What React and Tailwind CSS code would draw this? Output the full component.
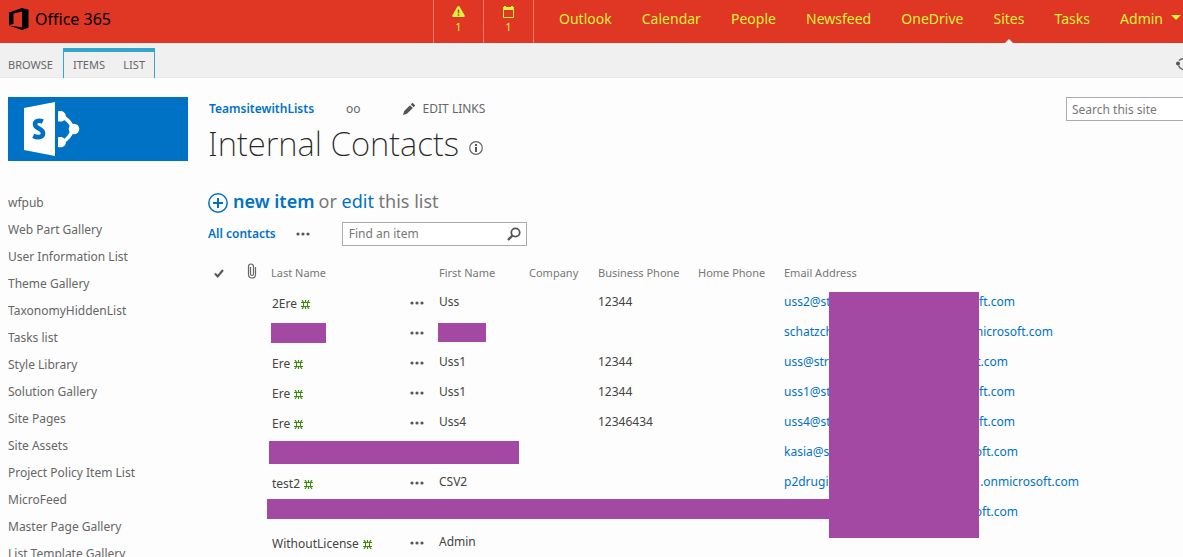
import React from "react";

const suiteLinks = ["Outlook", "Calendar", "People", "Newsfeed", "OneDrive", "Sites", "Tasks"];

const sideLinks = [
  "wfpub", "Web Part Gallery", "User Information List", "Theme Gallery", "TaxonomyHiddenList",
  "Tasks list", "Style Library", "Solution Gallery", "Site Pages", "Site Assets",
  "Project Policy Item List", "MicroFeed", "Master Page Gallery", "List Template Gallery",
];

const contacts = [
  { last: "2Ere", first: "Uss", phone: "12344", mail: ["uss2@st", "ft.com"], width: "w-[231px]" },
  { masked: true, mail: ["schatzch", "microsoft.com"], width: "w-[269px]" },
  { last: "Ere", first: "Uss1", phone: "12344", mail: ["uss@str", "t.com"], width: "w-[224px]" },
  { last: "Ere", first: "Uss1", phone: "12344", mail: ["uss1@st", "ft.com"], width: "w-[231px]" },
  { last: "Ere", first: "Uss4", phone: "12346434", mail: ["uss4@st", "ft.com"], width: "w-[231px]" },
  { hidden: true, mail: ["kasia@s", "oft.com"], width: "w-[234px]" },
  { last: "test2", first: "CSV2", mail: ["p2drugi", ".onmicrosoft.com"], width: "w-[295px]" },
  { hidden: true, mail: ["", "oft.com"], width: "w-[234px]" },
  { last: "WithoutLicense", first: "Admin" },
];

function OfficeMark() {
  return (
    <svg width="20" height="22" viewBox="0 0 20 22" aria-hidden="true">
      <path fill="#000" d="M0 4.500 13 0l6.500 1.800v18L13 22 0 17.500l13 1.700V3.600L4.500 5.600v10.200L0 17.500z" />
    </svg>
  );
}

function SharePointMark() {
  return (
    <svg width="56" height="54" viewBox="0 0 56 54" aria-hidden="true">
      <path fill="#fff" d="M0 6 31 0v54L0 48z" />
      <path fill="none" stroke="#0072c6" strokeWidth="4.600" d="M18.800 19.600c-3-1.500-7.800-1-7.800 2.600 0 4.500 8 4.300 8 9 0 4.600-5.500 4.600-9.800 2.600" />
      <path fill="none" stroke="#fff" strokeWidth="3.600" d="M38 14.500Q46 18 49 27 46 36 38 40.500" />
      <path fill="#fff" d="M34 9.200c4-1 7.800 1 7.800 5s-3.500 6.300-7.800 5zM34 35.300c4-1 7.800 1 7.800 5s-3.500 5.800-7.800 4.700z" />
      <circle cx="50" cy="27" r="5.300" fill="#fff" />
    </svg>
  );
}

function Dots() {
  return (
    <svg width="14" height="4" viewBox="0 0 14 4" aria-hidden="true">
      <g fill="#555"><circle cx="2" cy="2" r="1.600" /><circle cx="7" cy="2" r="1.600" /><circle cx="12" cy="2" r="1.600" /></g>
    </svg>
  );
}

function NewMark() {
  return (
    <svg width="9" height="9" viewBox="0 0 9 9" aria-label="New">
      <path fill="none" stroke="#3c8a0e" d="M2.500 2.500h4v4h-4zM0 2.500h3M6 2.500h3M0 6.500h3M6 6.500h3" />
      <path fill="none" stroke="#3c8a0e" strokeWidth="1.200" d="M1 0l2 3M8 0 6 3M1 9l2-3M8 9 6 6M4.500 0v2.500M4.500 6.500V9" />
    </svg>
  );
}

function SuiteBar() {
  return (
    <header className="flex h-[43px] bg-[#df3724] text-[#d9f03c]">
      <a href="#home" className="flex w-[433px] shrink-0 items-start gap-[6px] pl-[9px] pt-2 text-black">
        <OfficeMark />
        <span className="text-[16px] leading-[22px]">Office 365</span>
      </a>
      <button className="flex w-[50px] shrink-0 flex-col items-center border-l border-[#ea7b6e] pt-[6px] text-[11px] leading-[14px]" aria-label="Alerts">
        <svg width="13" height="11" viewBox="0 0 13 11" aria-hidden="true">
          <path fill="#d2f53c" d="M6.500 0c.6 0 .9.300 1.200.8l5 8.700c.4.800 0 1.500-.9 1.500H1.200c-.9 0-1.300-.7-.9-1.500l5-8.700c.3-.5.600-.8 1.200-.8z" />
          <path stroke="#df3724" strokeWidth="1.500" d="M6.500 3.500v3.800M6.500 8.300v1.500" />
        </svg>
        <span className="mt-[3px]">1</span>
      </button>
      <button className="flex w-[50px] shrink-0 flex-col items-center border-l border-[#ea7b6e] pt-[6px] text-[11px] leading-[14px]" aria-label="Reminders">
        <svg width="11" height="12" viewBox="0 0 11 12" aria-hidden="true">
          <path fill="none" stroke="#d2f53c" d="M.5 1.500h10v10H.5z" />
          <path fill="#d2f53c" d="M0 1h11v3H0zM1 0h2v2H1zM8 0h2v2H8z" />
        </svg>
        <span className="mt-[2px]">1</span>
      </button>
      <nav className="flex min-w-0 flex-1 justify-between whitespace-nowrap border-l border-[#ea7b6e] pl-[25px] pr-[2px] text-[14px] leading-[38px]">
        {suiteLinks.map((label) => (
          <a key={label} href="#suite" className="relative">
            {label}
            {label === "Sites" && (
              <svg className="absolute bottom-0 left-1/2 -translate-x-1/2" width="8" height="4" viewBox="0 0 8 4" aria-hidden="true">
                <path fill="#fff" d="M4 0l4 4H0z" />
              </svg>
            )}
          </a>
        ))}
        <button className="flex items-start gap-2">
          Admin
          <svg className="mt-[15px]" width="10" height="5" viewBox="0 0 10 5" aria-hidden="true"><path fill="#d2f53c" d="M0 0h10L5 5z" /></svg>
        </button>
      </nav>
    </header>
  );
}

function Ribbon() {
  return (
    <div className="flex h-[35px] justify-between border-b border-[#e9e9e9] bg-[#f0f0f0] text-[11px] leading-[33px] text-[#666]">
      <div className="flex">
        <button className="w-[63px] pb-0 pl-2 pt-[5px] text-left leading-[33px]">BROWSE</button>
        <div className="mt-[5px] flex h-[30px] w-[92px] justify-between border-x border-t-4 border-[#33a6cb] px-[9px] leading-[26px]">
          <button>ITEMS</button>
          <button>LIST</button>
        </div>
      </div>
      <button className="-mr-[7px] self-center pt-2" aria-label="Sync">
        <svg width="14" height="14" viewBox="0 0 14 14" aria-hidden="true">
          <path fill="none" stroke="#666" strokeWidth="1.400" d="M3 3.500A5.500 5.500 0 0 1 12.500 7M2.500 8.500A5.500 5.500 0 0 0 11 11.500" />
          <circle cx="2" cy="6.500" r="2" fill="#555" />
        </svg>
      </button>
    </div>
  );
}

function ContactTable() {
  return (
    <div className="relative mt-3">
      <table className="w-full table-fixed border-collapse text-left text-[12px] leading-[18px] text-[#444]">
        <colgroup>
          <col className="w-[39px]" /><col className="w-[24px]" /><col className="w-[139px]" /><col className="w-[29px]" />
          <col className="w-[90px]" /><col className="w-[69px]" /><col className="w-[100px]" /><col className="w-[86px]" /><col />
        </colgroup>
        <thead>
          <tr className="h-[30px] whitespace-nowrap text-[11px] text-[#777]">
            <th className="font-normal">
              <svg className="ml-[6px]" width="10" height="9" viewBox="0 0 10 9" aria-label="Select"><path fill="none" stroke="#555" strokeWidth="2" d="M1 4.500 3.700 7.500 9 1" /></svg>
            </th>
            <th className="font-normal">
              <svg className="mb-1" width="10" height="16" viewBox="0 0 10 16" aria-label="Attachments"><path fill="none" stroke="#666" strokeWidth="1.200" d="M3.500 4v7a1.500 1.500 0 0 0 3 0V3.500a2.500 2.500 0 0 0-5 0v8a3.500 3.500 0 0 0 7 0V4" /></svg>
            </th>
            <th className="font-normal">Last Name</th>
            <th />
            <th className="font-normal">First Name</th>
            <th className="font-normal">Company</th>
            <th className="font-normal">Business Phone</th>
            <th className="font-normal">Home Phone</th>
            <th className="font-normal">Email Address</th>
          </tr>
        </thead>
        <tbody>
          {contacts.map((c, i) => (
            <tr key={i} className="h-[30px] whitespace-nowrap align-top">
              <td />
              <td />
              <td className={c.masked ? "pt-[5px]" : "pl-px pt-[7px]"}>
                {c.masked && <span className="block h-5 w-[55px] bg-[#a349a4]" />}
                {c.last && <a href="#contact" className="flex items-center gap-1">{c.last} <NewMark /></a>}
              </td>
              <td className="pt-[13px]">
                {!c.hidden && <button className="block" aria-label="Open menu"><Dots /></button>}
              </td>
              <td className="pt-[5px]">{c.masked ? <span className="-ml-px block h-[19px] w-12 bg-[#a349a4]" /> : c.first}</td>
              <td />
              <td className="pt-[5px]">{c.phone}</td>
              <td />
              <td className="pt-[5px]">
                {c.mail && (
                  <a href="#mail" className={"flex justify-between text-[#0072c6] " + c.width}>
                    <span>{c.mail[0]}</span>
                    <span>{c.mail[1]}</span>
                  </a>
                )}
              </td>
            </tr>
          ))}
        </tbody>
      </table>
      <div className="absolute left-[61px] top-[183px] h-[23px] w-[250px] bg-[#a349a4]" />
      <div className="absolute left-[59px] top-[241px] h-5 w-[570px] bg-[#a349a4]" />
      <div className="absolute left-[621px] top-[34px] h-[246px] w-[150px] bg-[#a349a4]" />
    </div>
  );
}

export default function App() {
  return (
    <div className="h-screen overflow-hidden bg-[#fdfdfd] font-['Noto_Sans','Open_Sans',sans-serif] text-[#444]">
      <SuiteBar />
      <Ribbon />
      <div className="flex pl-2 pt-[19px]">
        <aside className="w-[180px] shrink-0">
          <a href="#site" className="flex h-16 items-center bg-[#0072c6] pl-4" aria-label="Site home"><SharePointMark /></a>
          <nav className="mt-7 flex flex-col whitespace-nowrap text-[12px] leading-[27px] text-[#666]">
            {sideLinks.map((label) => <a key={label} href="#list">{label}</a>)}
          </nav>
        </aside>
        <main className="ml-5 min-w-0 flex-1">
          <div className="flex justify-between">
            <div>
              <div className="flex h-6 items-center pl-px text-[12px]">
                <a href="#team" className="font-semibold text-[#0072c6]">TeamsitewithLists</a>
                <a href="#oo" className="ml-8 text-[#666]">oo</a>
                <button className="ml-[42px] flex items-center gap-2 text-[#666]">
                  <svg width="12" height="12" viewBox="0 0 12 12" aria-hidden="true"><path fill="#555" d="M0 12l1.200-4L7 2.200 9.800 5 4 10.800zM7.800 1.400 9 .2c.3-.3.700-.3 1 0L11.800 2c.3.300.3.700 0 1L10.600 4.200z" /></svg>
                  EDIT LINKS
                </button>
              </div>
              <h1 className="flex h-[46px] items-center gap-[10px] text-[33px] font-extralight leading-[46px] text-[#262626]">
                Internal Contacts
                <svg className="mt-2" width="14" height="14" viewBox="0 0 14 14" aria-label="Information">
                  <circle cx="7" cy="7" r="6.300" fill="none" stroke="#666" strokeWidth="1.200" />
                  <path fill="#555" d="M6 3h2v2H6zM6 6h2v5H6z" />
                </svg>
              </h1>
            </div>
            <input aria-label="Search this site" placeholder="Search this site" className="-mr-8 h-6 w-[149px] shrink-0 border border-[#ababab] bg-white px-[5px] text-[12px] placeholder:text-[#777]" />
          </div>
          <div className="mt-[19px] flex h-[30px] items-center text-[18px] text-[#777]">
            <button className="flex items-center gap-[5px] font-semibold text-[#0072c6]">
              <svg className="mt-[3px]" width="20" height="20" viewBox="0 0 20 20" aria-hidden="true">
                <circle cx="10" cy="10" r="9.200" fill="none" stroke="#0072c6" strokeWidth="1.500" />
                <path stroke="#0072c6" strokeWidth="2" d="M10 5v10M5 10h10" />
              </svg>
              new item
            </button>
            <span className="ml-1">or <a href="#edit" className="text-[#0072c6]">edit</a> this list</span>
          </div>
          <div className="mt-[6px] flex h-6 items-center text-[12px]">
            <a href="#all" className="font-semibold text-[#0072c6]">All contacts</a>
            <button className="ml-5" aria-label="More views"><Dots /></button>
            <div className="ml-8 flex h-6 w-[185px] items-center border border-[#ababab] bg-white pl-[6px] pr-[5px]">
              <input aria-label="Find an item" placeholder="Find an item" className="min-w-0 flex-1 bg-transparent outline-none placeholder:text-[#777]" />
              <button aria-label="Search">
                <svg width="14" height="14" viewBox="0 0 14 14" aria-hidden="true"><circle cx="8.500" cy="5.500" r="4.200" fill="none" stroke="#555" strokeWidth="1.800" /><path stroke="#555" strokeWidth="2.400" d="M5.500 8.500 1 13" /></svg>
              </button>
            </div>
          </div>
          <ContactTable />
        </main>
      </div>
    </div>
  );
}
